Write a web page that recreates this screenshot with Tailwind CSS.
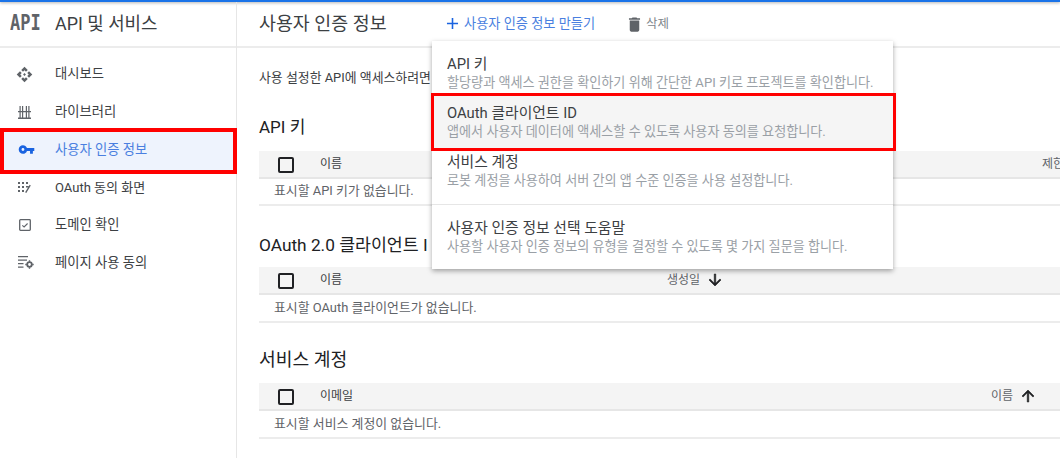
<!DOCTYPE html>
<html lang="ko">
<head>
<meta charset="utf-8">
<script src="https://cdn.jsdelivr.net/npm/@tailwindcss/browser@4"></script>
</head>
<body class="m-0 bg-white">
<div class="relative w-[1060px] h-[458px] overflow-hidden bg-white flex flex-col font-['Roboto','Noto_Sans_CJK_KR',sans-serif] text-[#3c4043]">
  <div class="h-[2px] shrink-0 bg-[#1a73e8] shadow-[0_1px_3px_rgba(0,0,0,0.35)]"></div>
  <div class="flex flex-1 min-h-0">
    <aside class="w-[237px] shrink-0 border-r border-[#e6e6e6] flex flex-col">
      <div class="h-[46px] shrink-0 border-b-2 border-[#ececec] flex items-center pl-[10px] gap-[15px]">
        <span class="font-['DejaVu_Sans_Mono',monospace] font-bold text-[17px] text-[#5f6368] w-[30px] scale-y-[1.2]">API</span>
        <span class="text-[17.9px] text-[#3c4043] whitespace-nowrap">API 및 서비스</span>
      </div>
      <nav class="flex flex-col pt-[7px] text-[13.3px]">
        <a class="h-[38px] flex items-center text-[#3c4043]">
          <span class="w-[55px] flex justify-center pr-[6px]">
            <svg class="w-[17px] h-[17px]" viewBox="0 0 24 24" fill="#5f6368"><path d="M14 12l-2 2-2-2 2-2 2 2zm-2-6l2.120 2.120 2.500-2.500L12 1 7.380 5.620l2.500 2.500L12 6zm-6 6l2.120-2.120-2.500-2.500L1 12l4.620 4.620 2.500-2.500L6 12zm12 0l-2.120 2.120 2.500 2.500L23 12l-4.620-4.620-2.500 2.500L18 12zm-6 6l-2.120-2.120-2.500 2.500L12 23l4.620-4.620-2.500-2.500L12 18z"/></svg>
          </span>대시보드
        </a>
        <a class="h-[37px] flex items-center text-[#3c4043]">
          <span class="w-[55px] flex justify-center pr-[6px]">
            <svg class="w-[13px] h-[14px]" viewBox="0 0 13 14" fill="#5f6368"><path d="M0 6h13v1.300H0zM0 12.500h13V14H0zM1.500 1h1.200v5H1.500zM4 1h1.200v5H4zM7.800 1H9v5H7.800zM10.300 1h1.200v5h-1.200zM1.500 7.300h1.200v5.200H1.500zM4 7.300h1.200v5.200H4zM7.800 7.300H9v5.200H7.800zM10.300 7.300h1.200v5.200h-1.200z"/></svg>
          </span>라이브러리
        </a>
        <a class="relative mt-[2px] ml-[4px] mr-[3px] h-[38px] pb-[3px] flex items-center text-[#4a7fe0] bg-[#eef3fd] outline-[4px] outline-[#ff0000] z-10">
          <span class="w-[51px] flex justify-center pr-[6px]">
            <svg class="w-[17px] h-[17px]" viewBox="0 0 24 24" fill="#1a63e0"><path d="M12.650 10C11.830 7.670 9.610 6 7 6c-3.310 0-6 2.690-6 6s2.690 6 6 6c2.610 0 4.830-1.670 5.650-4H17v4h4v-4h2v-4H12.650zM7 14c-1.100 0-2-.9-2-2s.9-2 2-2 2 .9 2 2-.9 2-2 2z"/></svg>
          </span>사용자 인증 정보
        </a>
        <a class="h-[35px] flex items-center text-[13px] text-[#3c4043]">
          <span class="w-[55px] flex justify-center pr-[6px]">
            <svg class="w-[13px] h-[12px]" viewBox="0 0 13 12" fill="#5f6368"><path d="M0 0h2v2H0zM4 0h2v2H4zM8 0h2v2H8zM0 4h2v2H0zM4 4h2v2H4zM0 8h2v2H0zM4 8h2v2H4zM12.800 3.500L8.300 11l-1.200-.8L11.700 2.700zM8 4h2.500v1.500H8z"/></svg>
          </span>OAuth 동의 화면
        </a>
        <a class="h-[40px] flex items-center text-[#3c4043]">
          <span class="w-[55px] flex justify-center pr-[6px]">
            <svg class="w-[12px] h-[12px]" viewBox="0 0 12 12" fill="none" stroke="#5f6368"><rect x="0.700" y="0.700" width="10.600" height="10.600" rx="0.800" stroke-width="1.300"/><path d="M3.300 6.300l1.800 1.700 3.500-3.500" stroke-width="1.100"/></svg>
          </span>도메인 확인
        </a>
        <a class="h-[35px] flex items-center text-[#3c4043]">
          <span class="w-[55px] flex justify-center pr-[4px]">
            <svg class="w-[16px] h-[13px]" viewBox="0 0 16 13" fill="#5f6368"><path d="M0 0h10v1.300H0zM0 3.500h9v1.300H0zM0 7h5.500v1.300H0zM0 10.500h5.500v1.300H0z"/><circle cx="11.500" cy="8.500" r="2.300" fill="none" stroke="#5f6368" stroke-width="1.800"/><path d="M10.800 4.300h1.400v1.500h-1.400zM10.800 11.200h1.400v1.500h-1.400zM7.300 7.800h1.500v1.400H7.300zM14.200 7.800h1.500v1.400h-1.500z"/></svg>
          </span>페이지 사용 동의
        </a>
      </nav>
    </aside>
    <main class="flex-1 min-w-0 flex flex-col">
      <header class="h-[46px] shrink-0 border-b-2 border-[#ececec] flex items-center pl-[22px]">
        <h1 class="w-[183.500px] text-[18.400px] font-normal text-[#3c4043] whitespace-nowrap">사용자 인증 정보</h1>
        <button class="flex items-center gap-[2.500px] text-[13.200px] text-[#4a7fe0] w-[182.500px] whitespace-nowrap">
          <svg class="w-[19px] h-[19px]" viewBox="0 0 24 24" fill="#1a63e0"><path d="M19 13h-6v6h-2v-6H5v-2h6V5h2v6h6v2z"/></svg>사용자 인증 정보 만들기
        </button>
        <button class="flex items-center gap-[2px] text-[12.500px] text-[#80868b] whitespace-nowrap">
          <svg class="w-[19px] h-[19px]" viewBox="0 0 24 24" fill="#5f6368"><path d="M6 19c0 1.100.9 2 2 2h8c1.100 0 2-.9 2-2V7H6v12zM19 4h-3.500l-1-1h-5l-1 1H5v2h14V4z"/></svg>삭제
        </button>
      </header>
      <section class="pl-[22px] flex flex-col">
        <p class="mt-[21px] text-[12.900px] leading-[18px] text-[#3c4043] whitespace-nowrap">사용 설정한 API에 액세스하려면</p>
        <h2 class="mt-[28px] h-[24px] leading-[24px] text-[17px] font-normal text-[#202124]">API 키</h2>

        <div class="mt-[12px] h-[28px] bg-[#f4f4f4] border-b-2 border-[#e6e6e6] flex items-center text-[12px] text-[#3c4043] relative">
          <span class="w-[16px] h-[16px] ml-[19px] mt-[2px] border-2 border-[#202124] rounded-[2px]"></span>
          <span class="ml-[26px]">이름</span>
          <span class="absolute left-[783px] whitespace-nowrap text-[#5f6368]">제한</span>
        </div>
        <div class="h-[27px] pb-[1px] border-b-2 border-[#ececec] flex items-center pl-[15px] text-[12.900px] text-[#5f6368]">표시할 API 키가 없습니다.</div>

        <h2 class="mt-[27px] h-[24px] leading-[24px] text-[17.300px] font-normal text-[#202124] whitespace-nowrap">OAuth 2.0 클라이언트 I</h2>
        <div class="mt-[10px] h-[28px] bg-[#f4f4f4] border-b-2 border-[#e6e6e6] flex items-center text-[12px] text-[#3c4043] relative">
          <span class="w-[16px] h-[16px] ml-[19px] mt-[2px] border-2 border-[#202124] rounded-[2px]"></span>
          <span class="ml-[26px]">이름</span>
          <span class="absolute left-[408px] flex items-center gap-[6px] text-[#5f6368]">생성일
            <svg class="w-[18px] h-[18px]" viewBox="0 0 24 24" fill="#202124" stroke="#202124" stroke-width="0.800"><path d="M20 12l-1.410-1.410L13 16.170V4h-2v12.170l-5.580-5.590L4 12l8 8 8-8z"/></svg>
          </span>
        </div>
        <div class="h-[28px] border-b-2 border-[#ececec] flex items-center pl-[15px] text-[12.900px] text-[#5f6368]">표시할 OAuth 클라이언트가 없습니다.</div>

        <h2 class="mt-[25px] h-[24px] leading-[24px] text-[18.200px] font-normal text-[#202124]">서비스 계정</h2>
        <div class="mt-[11px] h-[28px] bg-[#f4f4f4] border-b-2 border-[#e6e6e6] flex items-center text-[12px] text-[#3c4043] relative">
          <span class="w-[16px] h-[16px] ml-[19px] mt-[2px] border-2 border-[#202124] rounded-[2px]"></span>
          <span class="ml-[26px]">이메일</span>
          <span class="absolute left-[732px] flex items-center gap-[6px] text-[#5f6368]">이름
            <svg class="w-[18px] h-[18px]" viewBox="0 0 24 24" fill="#202124" stroke="#202124" stroke-width="0.800"><path d="M4 12l1.410 1.410L11 7.830V20h2V7.830l5.580 5.590L20 12l-8-8-8 8z"/></svg>
          </span>
        </div>
        <div class="h-[28px] border-b-2 border-[#ececec] flex items-center pl-[15px] text-[12.900px] text-[#5f6368]">표시할 서비스 계정이 없습니다.</div>
      </section>
    </main>
  </div>

  <div class="absolute left-[432px] top-[41px] w-[461px] h-[228px] bg-white z-20 shadow-[0_2px_5px_rgba(0,0,0,0.35)] flex flex-col">
    <div class="h-[55px] shrink-0 pl-[15px] pt-[13px]">
      <div class="text-[14.800px] leading-[20px] text-[#3c4043]">API 키</div>
      <div class="text-[13.100px] leading-[18px] text-[#9aa0a6] whitespace-nowrap">할당량과 액세스 권한을 확인하기 위해 간단한 API 키로 프로젝트를 확인합니다.</div>
    </div>
    <div class="h-[52px] shrink-0 ml-[2px] pl-[13px] pt-[7px] bg-[#f5f5f5] outline-[3px] outline-[#ff0000]">
      <div class="text-[14.800px] leading-[20px] text-[#3c4043]">OAuth 클라이언트 ID</div>
      <div class="text-[13.100px] leading-[18px] text-[#9aa0a6] whitespace-nowrap">앱에서 사용자 데이터에 액세스할 수 있도록 사용자 동의를 요청합니다.</div>
    </div>
    <div class="h-[57px] shrink-0 pl-[15px] pt-[4px] border-b border-[#e6e6e6]">
      <div class="text-[14.800px] leading-[20px] text-[#3c4043]">서비스 계정</div>
      <div class="text-[13.100px] leading-[18px] text-[#9aa0a6] whitespace-nowrap">로봇 계정을 사용하여 서버 간의 앱 수준 인증을 사용 설정합니다.</div>
    </div>
    <div class="flex-1 pl-[15px] pt-[13px]">
      <div class="text-[14.800px] leading-[20px] text-[#3c4043]">사용자 인증 정보 선택 도움말</div>
      <div class="text-[13.100px] leading-[18px] text-[#9aa0a6] whitespace-nowrap">사용할 사용자 인증 정보의 유형을 결정할 수 있도록 몇 가지 질문을 합니다.</div>
    </div>
  </div>
</div>
</body>
</html>
